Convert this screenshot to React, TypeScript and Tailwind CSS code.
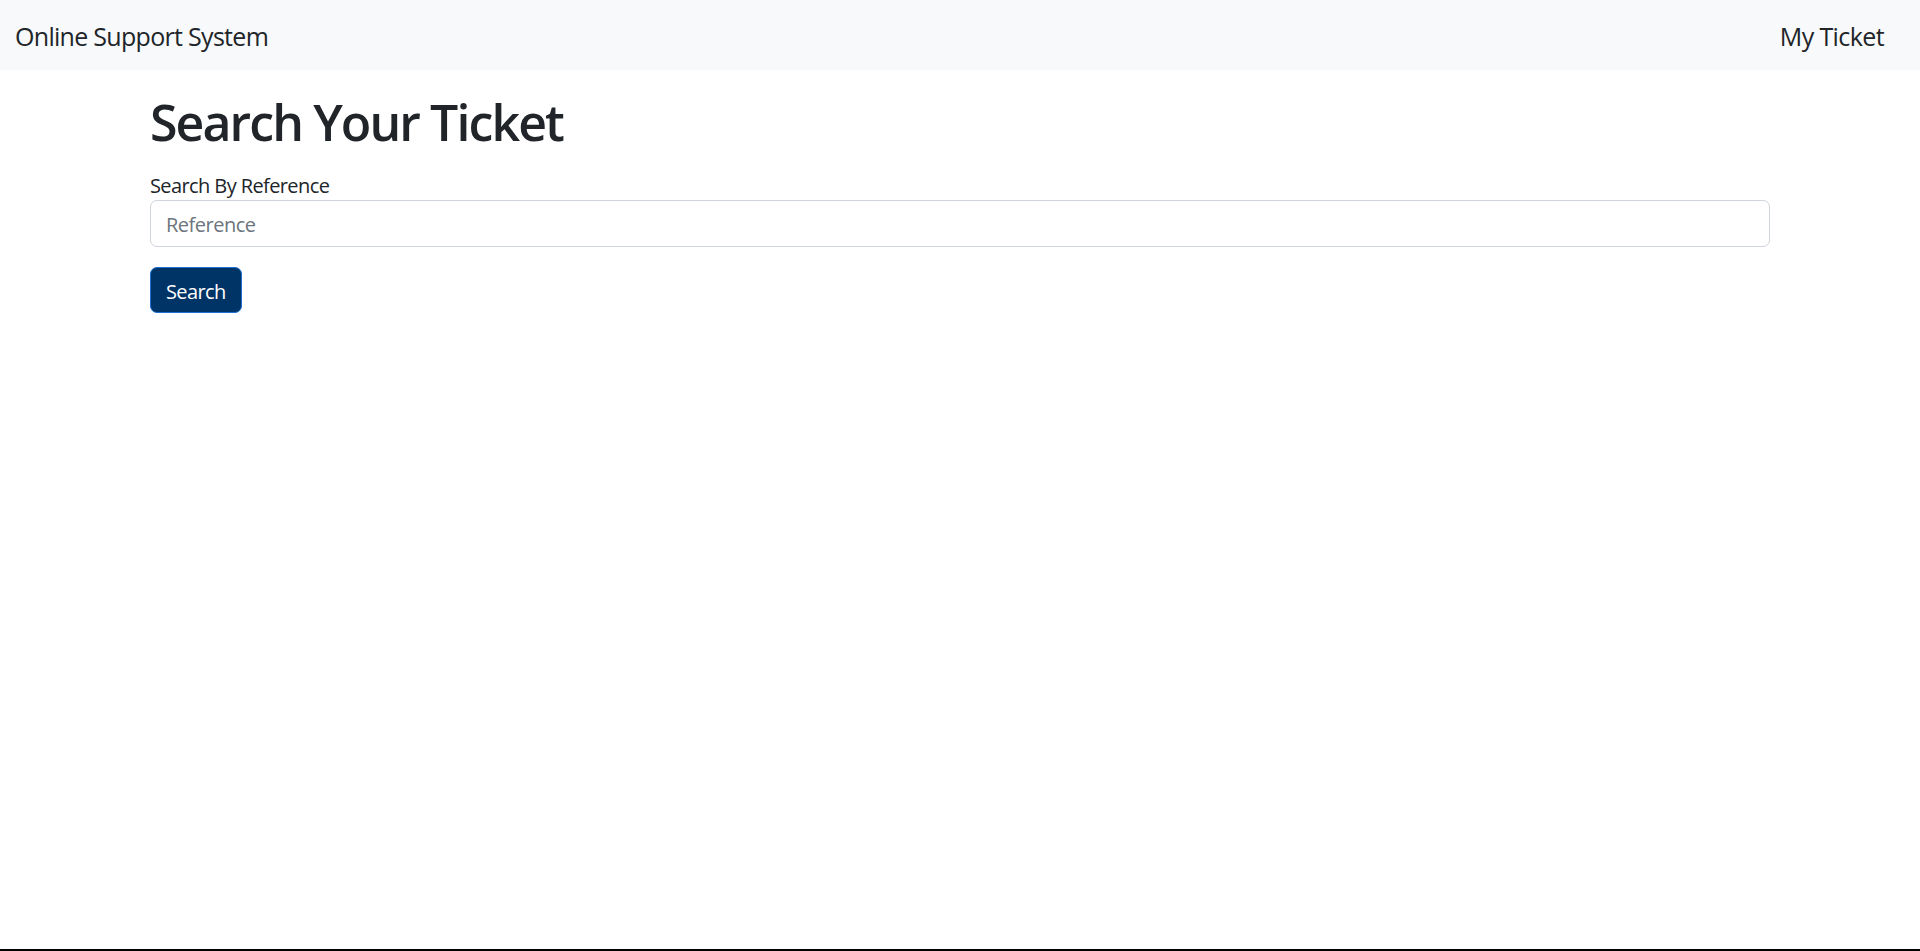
import React from "react";

export default function App() {
  return (
    <div className="min-h-[951px] flex flex-col bg-white text-[#212529] font-['Open_Sans',sans-serif]">
      <nav className="h-[70px] bg-[#f8f9fa] flex items-center justify-between px-[15px] pt-[3px]">
        <a className="text-[25px] leading-[1.5] text-[#212529] tracking-[-0.7px]">Online Support System</a>
        <a className="text-[25px] leading-[1.5] text-[#212529] mr-[21px] tracking-[-0.6px]">My Ticket</a>
      </nav>
      <main className="flex-1 w-[1650px] mx-auto px-[15px] pt-[22px]">
        <h1 className="text-[50px] leading-[1.2] font-semibold mb-[20px] tracking-[-1.9px]">Search Your Ticket</h1>
        <label className="block text-[20px] leading-[27.5px] tracking-[-0.6px]">Search By Reference</label>
        <input
          placeholder="Reference"
          className="block w-full h-[47.5px] border border-[#ced4da] rounded-[7px] px-[15px] pt-[2px] text-[20px] tracking-[-0.5px] text-[#212529] placeholder:text-[#6c757d] outline-none"
        />
        <button className="mt-[20px] h-[46px] px-[15px] pt-[3px] text-[20px] tracking-[-0.6px] text-white bg-[#003366] border border-[#1f6fd1] rounded-[7px]">
          Search
        </button>
      </main>
      <div className="h-[2px] bg-black" />
    </div>
  );
}
